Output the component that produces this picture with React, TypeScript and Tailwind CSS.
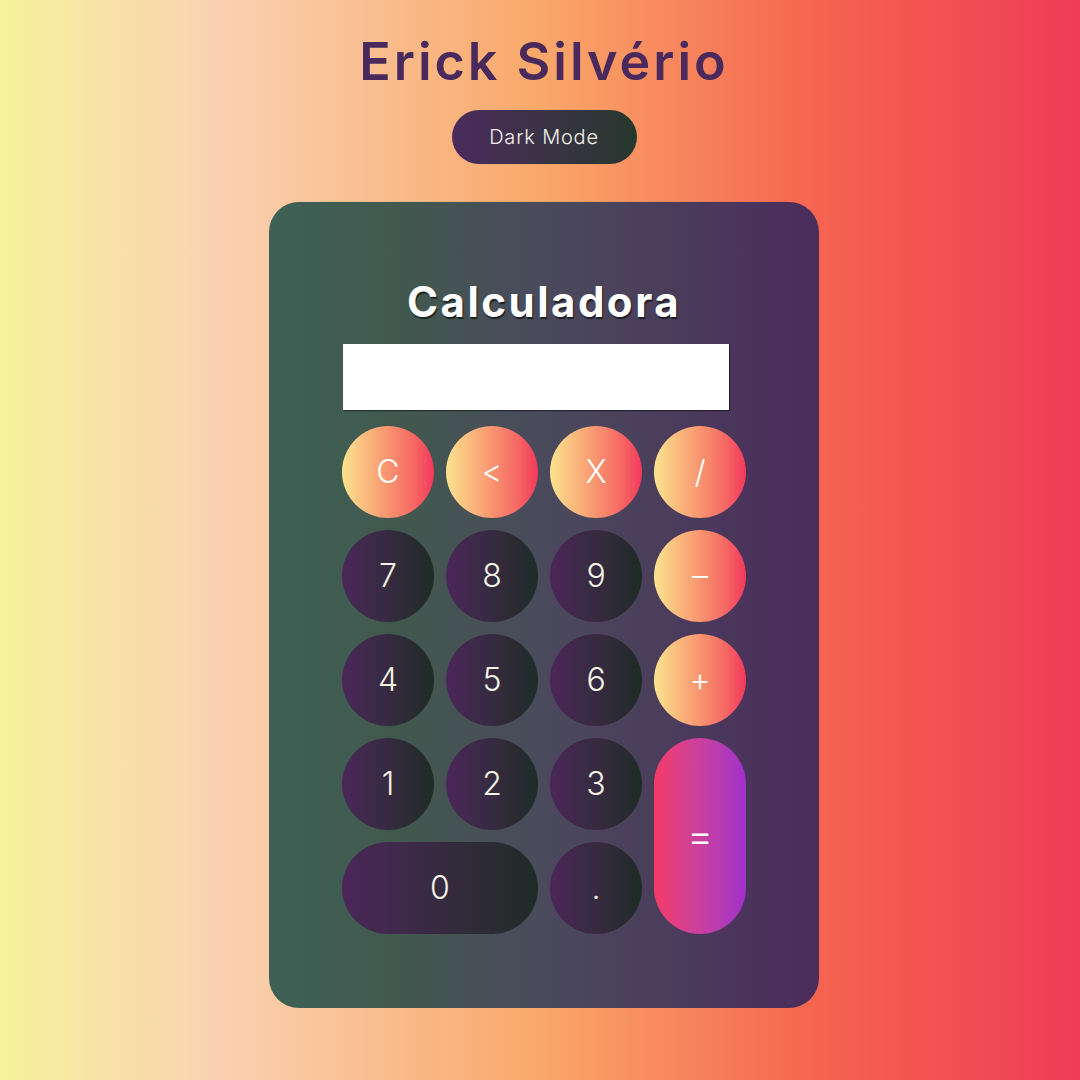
import React, { useState } from 'react';

const opKeys = 'bg-linear-to-r from-[#fbe38f] via-[#f7946f] to-[#f3365b]';
const numKeys = 'bg-linear-to-r from-[#4b2659] to-[#1f2b26]';

type Key = { label: string; kind: 'op' | 'num' | 'eq'; span?: string };

const keys: Key[] = [
  { label: 'C', kind: 'op' },
  { label: '<', kind: 'op' },
  { label: 'X', kind: 'op' },
  { label: '/', kind: 'op' },
  { label: '7', kind: 'num' },
  { label: '8', kind: 'num' },
  { label: '9', kind: 'num' },
  { label: '-', kind: 'op' },
  { label: '4', kind: 'num' },
  { label: '5', kind: 'num' },
  { label: '6', kind: 'num' },
  { label: '+', kind: 'op' },
  { label: '1', kind: 'num' },
  { label: '2', kind: 'num' },
  { label: '3', kind: 'num' },
  { label: '=', kind: 'eq', span: 'row-span-2' },
  { label: '0', kind: 'num', span: 'col-span-2' },
  { label: '.', kind: 'num' },
];

const App: React.FC = () => {
  const [display, setDisplay] = useState('');

  const press = (k: string) => {
    if (k === 'C') return setDisplay('');
    if (k === '<') return setDisplay(display.slice(0, -1));
    if (k === '=') {
      try {
        // eslint-disable-next-line no-new-func
        setDisplay(String(Function('return ' + display.replace(/X/g, '*'))()));
      } catch {
        setDisplay('');
      }
      return;
    }
    setDisplay(display + k);
  };

  return (
    <div className="min-h-[1080px] w-full pl-2 flex flex-col items-center bg-[linear-gradient(to_right,#f6f29c,#fad2b2_20%,#f9a86a_50%,#f6634f_76%,#ee3c57)] font-['Inter','Liberation_Sans',sans-serif]">
      <h1 className="mt-[28px] text-[52px] leading-[68px] font-semibold text-[#4a2a5c] tracking-[3px]">
        Erick Silvério
      </h1>

      <button className="mt-[14px] w-[185px] h-[54px] rounded-full bg-linear-to-r from-[#4b2a5d] to-[#26382c] text-[#f4f1e8] text-[20px] font-light tracking-[0.8px]">
        Dark Mode
      </button>

      <div className="mt-[38px] w-[550px] h-[806px] rounded-[30px] bg-[linear-gradient(to_right,#3e6155,#42584f_25%,#4a4a5c_50%,#4b2c5b)] flex flex-col pt-[76px] px-[73px]">
        <h2 className="text-center text-[42px] leading-[48px] font-bold text-white tracking-[2.5px] [text-shadow:1px_2px_1px_rgba(0,0,0,0.6)]">
          Calculadora
        </h2>

        <input
          value={display}
          readOnly
          className="mt-[18px] ml-px w-[386px] h-[66px] bg-white shadow-[1px_1px_1px_rgba(0,0,0,0.5)] outline-none px-3 text-right text-3xl text-[#333]"
        />

        <div className="mt-[16px] grid grid-cols-[repeat(4,92px)] auto-rows-[92px] gap-3">
          {keys.map((k) => (
            <button
              key={k.label}
              onClick={() => press(k.label)}
              className={`${k.span ?? ''} rounded-full flex items-center justify-center font-light ${
                k.kind === 'op'
                  ? `${opKeys} text-white text-[32px]`
                  : k.kind === 'eq'
                    ? 'bg-linear-to-r from-[#f53a67] to-[#a12fcb] text-white text-[40px]'
                    : `${numKeys} text-[#f6f2e6] text-[32px]`
              }`}
            >
              {k.label === '-' ? '–' : k.label}
            </button>
          ))}
        </div>
      </div>
    </div>
  );
};

export default App;
